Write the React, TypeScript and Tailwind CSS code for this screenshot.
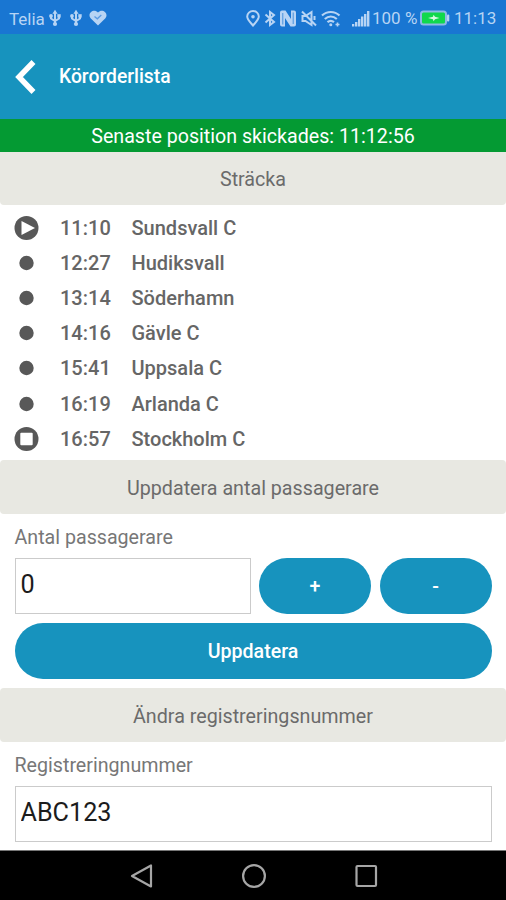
import { useState } from "react";

type Stop = {
  time: string;
  name: string;
  kind: "start" | "stop" | "end";
};

const STOPS: Stop[] = [
  { time: "11:10", name: "Sundsvall C", kind: "start" },
  { time: "12:27", name: "Hudiksvall", kind: "stop" },
  { time: "13:14", name: "Söderhamn", kind: "stop" },
  { time: "14:16", name: "Gävle C", kind: "stop" },
  { time: "15:41", name: "Uppsala C", kind: "stop" },
  { time: "16:19", name: "Arlanda C", kind: "stop" },
  { time: "16:57", name: "Stockholm C", kind: "end" },
];

function UsbIcon() {
  return (
    <svg width="12" height="18" viewBox="0 0 12 18" fill="none" stroke="currentColor" strokeWidth="2">
      <path d="M6 3v12M2 7v2.500L6 12l4-2.500V6.500" />
      <path d="M6 0.800L3.400 4.800h5.200z" fill="currentColor" stroke="none" />
      <circle cx="2" cy="7" r="1.900" fill="currentColor" stroke="none" />
      <path d="M8.300 5.200h3.400v3.400H8.300z" fill="currentColor" stroke="none" />
      <circle cx="6" cy="15" r="2.100" fill="currentColor" stroke="none" />
    </svg>
  );
}

function StatusBar() {
  return (
    <div className="flex h-[34px] shrink-0 items-center bg-[#1976d2] pt-0.5 text-[#b7d4f4]">
      <span className="ml-[9px] w-10 pt-0.5 text-[17px] leading-none">Telia</span>
      <UsbIcon />
      <span className="w-[9px]" />
      <UsbIcon />
      <svg className="ml-[7px]" width="18" height="16" viewBox="0 0 18 16">
        <path d="M9 15.500L1.600 8.200C-2.200 3.600 4.600-2.200 9 2.400 13.400-2.200 20.200 3.600 16.400 8.200z" fill="currentColor" />
        <path d="M5.500 6.500l2.800 2.300 4-3.800" fill="none" stroke="#5b9be2" strokeWidth="1.300" />
      </svg>

      <div className="ml-auto flex items-center">
        {/* location */}
        <svg width="14" height="17" viewBox="0 0 14 17" fill="none" stroke="currentColor" strokeWidth="2">
          <path d="M7 15.500C4 12 1.200 9.500 1.200 6.500a5.800 5.500 0 0 1 11.600 0C12.800 9.500 10 12 7 15.500z" />
          <circle cx="7" cy="6.700" r="1.800" fill="currentColor" stroke="none" />
        </svg>
        {/* bluetooth */}
        <svg className="ml-1" width="12" height="17" viewBox="0 0 12 17" fill="none" stroke="currentColor" strokeWidth="2">
          <path d="M1.500 4.500l8.500 7.500L6 15V2l4 3-8.500 7.500" />
        </svg>
        {/* nfc */}
        <svg className="ml-1" width="16" height="17" viewBox="0 0 16 17">
          <path d="M0 2.500a2 2 0 0 1 2-2h3.500L11 9V.5h3a2 2 0 0 1 2 2v12a2 2 0 0 1-2 2h-3.500L5 8v8.500H2a2 2 0 0 1-2-2z" fill="currentColor" />
          <path d="M2.800 3v11.500M13.200 2.500V14" fill="none" stroke="#1976d2" strokeWidth="0.700" />
        </svg>
        {/* muted */}
        <svg className="ml-[5px]" width="16" height="17" viewBox="0 0 16 17" fill="none" stroke="currentColor" strokeWidth="2">
          <path d="M1.500 6v5h3l6 4V2l-6 4zM1 1.500l14 14" />
          <path d="M13.500 6v4" />
        </svg>
        {/* wifi */}
        <svg className="ml-1" width="20" height="17" viewBox="0 0 20 17" fill="none" stroke="currentColor" strokeWidth="2.200">
          <path d="M1 5.500c5-4.700 12.500-4.700 17.500 0M3.800 9c3.600-3.200 8.400-3.200 12 0M6.500 12.200c2-1.700 4.500-1.700 6.500 0" />
          <circle cx="9.800" cy="14.800" r="1.500" fill="currentColor" stroke="none" />
          <path d="M14.500 14.500h4M16.500 12.500v4" strokeWidth="1.600" />
        </svg>
        {/* signal */}
        <svg className="ml-[11px]" width="18" height="17" viewBox="0 0 18 17" fill="currentColor">
          <path d="M0 14h2.300v2.500H0zM3 12h2.400v4.500H3zM6 9h2.400v7.500H6zM9 6.500h2.400v10H9zM12 4h2.400v12.500H12zM15 1h2.400v15.500H15z" />
        </svg>
        <span className="ml-0.5 w-[48px] whitespace-nowrap text-[17px] leading-none">100 %</span>
        {/* battery */}
        <svg width="30" height="17" viewBox="0 0 30 17">
          <rect x="1" y="1.500" width="25" height="13" rx="2.500" fill="#10d84c" stroke="#8db9e6" strokeWidth="2" />
          <rect x="27" y="4.500" width="2.300" height="7" rx="1" fill="#b7d4f4" />
          <path d="M8 8l5-1.200.5-2 1.500 2L19.500 8 15 9.200l-1.500 2-.5-2z" fill="#d6fbe2" />
        </svg>
        <span className="ml-1 mr-[10px] w-[42px] text-[17px] leading-none">11:13</span>
      </div>
    </div>
  );
}

function StopMarker({ kind }: { kind: Stop["kind"] }) {
  return (
    <svg width="25" height="24" viewBox="0 0 25 24">
      <circle cx="12.500" cy="12" r={kind === "stop" ? 7.2 : 12} fill="#585858" />
      {kind === "start" && <path d="M7.500 5v14L21 12z" fill="#fff" />}
      {kind === "end" && <rect x="6.300" y="5.800" width="12.400" height="12.400" rx="1" fill="#fff" />}
    </svg>
  );
}

function SectionHeader({ title }: { title: string }) {
  return (
    <h2 className="flex h-[54px] shrink-0 items-center justify-center rounded-[4px] bg-[#e8e8e2] pt-[3px] text-[19.7px] text-[#6b6b6b]">
      {title}
    </h2>
  );
}

export default function App() {
  const [passengers, setPassengers] = useState(0);
  const [regNumber, setRegNumber] = useState("ABC123");

  const button =
    "h-14 rounded-full bg-[#1793be] pt-px text-[19.6px] font-medium text-white";
  const input =
    "h-14 w-full min-w-0 border-[1.5px] border-[#cbcbcb] bg-white pb-1 pl-[5px] text-[25.2px] text-[#1c1c1c] outline-none";

  return (
    <div className="flex h-[900px] w-[506px] flex-col overflow-hidden bg-white font-['Roboto',sans-serif]">
      <StatusBar />

      <header className="flex h-[85px] shrink-0 items-center bg-[#1793be] text-white">
        <svg className="ml-[15px]" width="22" height="36" viewBox="0 0 22 36" fill="none" stroke="currentColor" strokeWidth="5.500">
          <path d="M18.500 3L4 18l14.500 15" />
        </svg>
        <h1 className="ml-[22px] pt-0.5 text-[19.3px] font-medium">Körorderlista</h1>
      </header>

      <div className="flex h-[33px] shrink-0 items-center justify-center bg-[#049a33] pt-0.5 text-[19.65px] text-white">
        Senaste position skickades: 11:12:56
      </div>

      <h2 className="flex h-[53px] shrink-0 items-center justify-center rounded-b-[4px] bg-[#e8e8e2] pt-0.5 text-[19.7px] text-[#6b6b6b]">
        Sträcka
      </h2>

      <ul className="flex h-[255px] shrink-0 flex-col pt-[5px] text-[20px] font-medium text-[#666]">
        {STOPS.map((stop) => (
          <li key={stop.time} className="flex h-[35.2px] items-center pl-[14px]">
            <StopMarker kind={stop.kind} />
            <span className="ml-[21px] w-[71.5px]">{stop.time}</span>
            <span>{stop.name}</span>
          </li>
        ))}
      </ul>

      <SectionHeader title="Uppdatera antal passagerare" />

      <div className="flex h-[174px] shrink-0 flex-col px-[14.5px]">
        <label htmlFor="passengers" className="flex h-[44px] items-center pt-[3px] text-[19.65px] text-[#777]">
          Antal passagerare
        </label>
        <div className="grid grid-cols-[236px_112px_112px] justify-between">
          <input
            id="passengers"
            className={input}
            value={passengers}
            onChange={(e) => setPassengers(Number(e.target.value) || 0)}
          />
          <button className={button} onClick={() => setPassengers(passengers + 1)}>
            +
          </button>
          <button className={button} onClick={() => setPassengers(Math.max(0, passengers - 1))}>
            -
          </button>
        </div>
        <button className={`${button} mt-[9px]`}>Uppdatera</button>
      </div>

      <SectionHeader title="Ändra registreringsnummer" />

      <div className="flex h-[108px] shrink-0 flex-col px-[14.5px]">
        <label htmlFor="regnr" className="flex h-[44px] items-center pt-[3px] text-[19.65px] text-[#777]">
          Registreringnummer
        </label>
        <input
          id="regnr"
          className={input}
          value={regNumber}
          onChange={(e) => setRegNumber(e.target.value)}
        />
      </div>

      <nav className="flex h-[50px] shrink-0 items-center justify-center gap-[88px] border-t border-[#777] bg-black pl-px">
        <svg width="24" height="24" viewBox="0 0 24 24" fill="none" stroke="#a6a6a6" strokeWidth="2.200">
          <path d="M21 1.500v21L2 12z" strokeLinejoin="round" />
        </svg>
        <svg width="24" height="24" viewBox="0 0 24 24" fill="none" stroke="#a6a6a6" strokeWidth="2.200">
          <circle cx="12" cy="12" r="10.900" />
        </svg>
        <svg width="24" height="24" viewBox="0 0 24 24" fill="none" stroke="#a6a6a6" strokeWidth="2.200">
          <rect x="2.500" y="2" width="19.500" height="20" rx="1" />
        </svg>
      </nav>
    </div>
  );
}
